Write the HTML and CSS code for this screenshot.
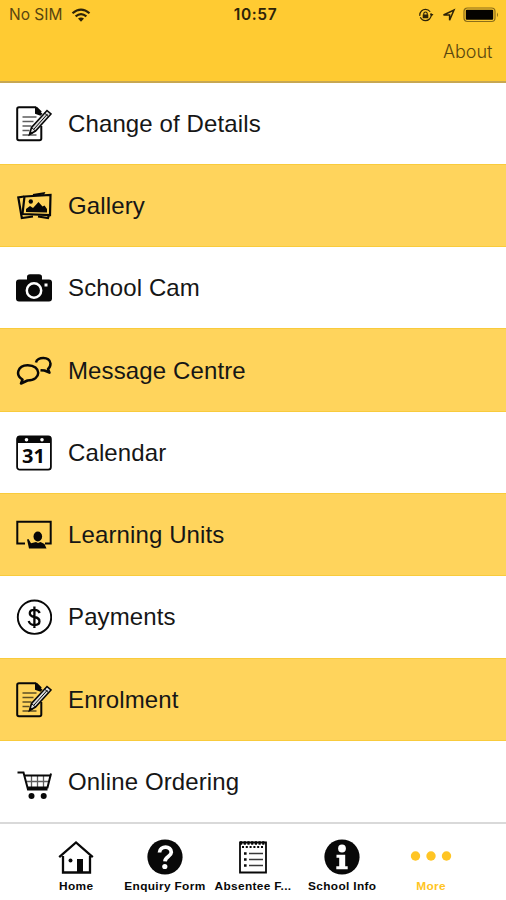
FILE: index.html
```html
<!DOCTYPE html>
<html lang="en">
<head>
<meta charset="utf-8">
<title>More</title>
<link rel="stylesheet" href="styles.css">
</head>
<body>
<svg class="defs" aria-hidden="true">
  <symbol id="form" viewBox="0 0 36 36">
    <path d="M20 1.200H3Q1.200 1.200 1.200 3v29.500Q1.200 34.300 3 34.300h20.500q1.800 0 1.800-1.800V20M20 1.200l5 5" fill="none" stroke="currentColor" stroke-width="2"/>
    <path d="M19 .8l7.500 7-2 2-5.500-2z"/>
    <path d="M6.500 11h14M6.500 15.500h11M6.500 20h9M6.500 24.500h7M6.500 29h14" stroke="currentColor" stroke-width="1.300" opacity=".65"/>
    <path d="M13.500 28.500l2-7L31 4.500l4 3.500-15.500 17z" class="pencil" stroke="currentColor" stroke-width="1.600"/>
    <path d="M18 23L31.500 8M28.500 7l4 3.700M15.500 21.500l4 3.500" fill="none" stroke="currentColor" stroke-width="1"/>
    <path d="M13 29l1.200-4 2.800 2.500z"/>
  </symbol>
</svg>
<header class="top">
  <div class="status">
    <div class="left"><span class="carrier">No SIM</span>
      <svg class="wifi" viewBox="0 0 20 14"><path d="M1.500 5.300Q10-2.200 18.500 5.300M4.600 8.300Q10 3.800 15.400 8.300" fill="none" stroke="currentColor" stroke-width="2.200"/><path d="M7 10.600Q10 8.300 13 10.600L10 13.700z"/></svg>
    </div>
    <span class="time">10:57</span>
    <div class="right">
      <svg class="lock" viewBox="0 0 16 14"><circle cx="7.500" cy="7" r="5.700" fill="none" stroke="currentColor" stroke-width="1.200" stroke-dasharray="15 1.500"/><path d="M4.700 6.500h5.600v3.700H4.700zM12 6h3.500l-1.800 2.500z"/><path d="M5.800 7V5.200q1.700-2.300 3.400 0V7" fill="none" stroke="currentColor" stroke-width="1.100"/></svg>
      <svg class="arrow" viewBox="0 0 14 14"><path d="M1.500 7L12 2 7.600 12.300V7z" fill="none" stroke="currentColor" stroke-width="1.500"/></svg>
      <svg class="battery" viewBox="0 0 37 16"><rect x="1" y="1" width="31" height="13.500" rx="3.500" fill="none" stroke="#8b6d19" stroke-width="1.200"/><rect x="2.800" y="2.800" width="27.400" height="10" rx="1"/><path d="M34 5.500q2 2.300 0 4.600z" fill="#8b6d19"/></svg>
    </div>
  </div>
  <div class="nav"><a class="about">About</a></div>
</header>
<main class="list">
  <div class="row"><svg class="icon"><use href="#form"/></svg><span class="label">Change of Details</span></div>
  <div class="row"><svg class="icon" viewBox="0 0 36 36"><g fill="none" stroke="currentColor" stroke-width="2.200"><path d="M8 8.500L2.300 9.500l3.500 20.500L17 28.500M27 6.500l.5-1L17 7M22 28.500l10 1.500 1-3"/><path d="M8.500 8.500L34.500 7 34 27 6.500 26z"/></g><circle cx="14.800" cy="13.500" r="2.200"/><path d="M10 24v-3l4-3 3 2 5.500-6 4 4.500 2-1 2.500 3.500v3.500z"/></svg><span class="label">Gallery</span></div>
  <div class="row"><svg class="icon" viewBox="0 0 36 36"><path d="M3 9.500h8V7Q11 4.200 14 4.200h9Q26 4.200 26 7v2.500h7q3 0 3 3v16q0 3-3 3H3q-3 0-3-3v-16q0-3 3-3z"/><circle cx="18" cy="20.500" r="7.200" fill="none" stroke="#fff" stroke-width="2.500"/><rect x="28.500" y="13.500" width="3" height="3" fill="#fff"/></svg><span class="label">School Cam</span></div>
  <div class="row"><svg class="icon" viewBox="0 0 36 36"><g fill="none" stroke="currentColor" stroke-width="2.500" stroke-linejoin="round"><path d="M6.500 26.500C-1 22 1.500 12.500 11.500 12.300c14-.2 14.500 15.200 0 15.200L5 30.500z"/><path d="M20 9.500C21 3.500 34 3 34.500 10.500q0 3.500-2.500 5.500l1.500 3.700-5-2.200-4-.3"/></g></svg><span class="label">Message Centre</span></div>
  <div class="row"><svg class="icon" viewBox="0 0 36 36"><rect x="1.100" y="1.300" width="33.800" height="33.400" rx="2.700" fill="none" stroke="currentColor" stroke-width="1.800"/><path d="M1 8V3q0-2 2-2h30q2 0 2 2v5z"/><g fill="#fff"><circle cx="10.500" cy="4.700" r="1.800"/><circle cx="26" cy="4.700" r="1.800"/></g><text class="date" x="17.500" y="28.300">31</text></svg><span class="label">Calendar</span></div>
  <div class="row"><svg class="icon" viewBox="0 0 36 36"><path d="M9 26.500H1.300V4.700h33.400v21.800H29" fill="none" stroke="currentColor" stroke-width="2"/><ellipse cx="21.800" cy="19.500" rx="4.300" ry="5"/><path d="M11 22.500l1.500-.5 2.500 4.200 5-1.200 2 1 2.500-1 4 2 2 4.500H13z"/></svg><span class="label">Learning Units</span></div>
  <div class="row"><svg class="icon" viewBox="0 0 36 36"><circle cx="18.500" cy="18.200" r="16.700" fill="none" stroke="currentColor" stroke-width="1.900"/><path d="M23.700 14Q22.500 10.800 18.400 10.800c-6 0-6.300 6 0 7.200 7 1.300 6.500 8 0 8q-4.500 0-5.700-4M18.400 7.500V29" fill="none" stroke="currentColor" stroke-width="2.300"/></svg><span class="label">Payments</span></div>
  <div class="row"><svg class="icon"><use href="#form"/></svg><span class="label">Enrolment</span></div>
  <div class="row"><svg class="icon" viewBox="0 0 36 36"><path d="M1.500 8.500h6l4.500 17h19.500M8.500 11.500h26l-3 12H12M35 9.500l-.7 3" fill="none" stroke="currentColor" stroke-width="2"/><path d="M10.500 17.500h22M15.500 12v11M21.500 12v11M27.500 12v11" stroke="currentColor" stroke-width="1.300" opacity=".65"/><circle cx="15.500" cy="32" r="3"/><circle cx="27.700" cy="32" r="3"/></svg><span class="label">Online Ordering</span></div>
</main>
<footer class="tabs">
  <a class="tab"><svg class="icon" viewBox="0 0 36 36"><path d="M1.200 18.200L18 3.500l16.800 14.700M5 17v16.500h27V17" fill="none" stroke="currentColor" stroke-width="2.300"/><path d="M19 20h6v13h-6z"/><circle cx="12.500" cy="21.500" r="2"/></svg><span>Home</span></a>
  <a class="tab"><svg class="icon" viewBox="0 0 36 36"><circle cx="18" cy="18" r="17.600"/><path d="M12.500 13.500c.3-7.200 12-7 11.800-.2-.1 4.200-6.100 4.200-6.300 9" fill="none" stroke="#fff" stroke-width="3.800"/><circle cx="17.800" cy="27.500" r="2.600" fill="#fff"/></svg><span>Enquiry Form</span></a>
  <a class="tab"><svg class="icon" viewBox="0 0 36 36"><path d="M5 3.500h26v30H5z" fill="none" stroke="currentColor" stroke-width="1.800"/><path d="M5 4h26" stroke="currentColor" stroke-width="3.500" stroke-dasharray="2.200 1.500"/><path d="M7 8h22" stroke="currentColor" stroke-width="2" stroke-dasharray="2 1.800"/><path d="M14 14.500h14M14 20.500h14M14 26.500h14" stroke="currentColor" stroke-width="1.300" opacity=".8"/><path d="M9 14.500h2.600M9 20.500h2.600M9 26.500h2.600" stroke="currentColor" stroke-width="2.500"/></svg><span>Absentee F...</span></a>
  <a class="tab"><svg class="icon" viewBox="0 0 36 36"><circle cx="18" cy="18" r="17.600"/><g fill="#fff"><circle cx="18" cy="9.500" r="3.900"/><path d="M12.500 15.800h8.700v11.500h2.500v2.900H12.300v-2.900h2.900v-8.600h-2.700z"/></g></svg><span>School Info</span></a>
  <a class="tab active"><svg class="dots" viewBox="0 0 42 36"><circle cx="5.500" cy="17" r="4.700"/><circle cx="21" cy="17" r="4.700"/><circle cx="36.500" cy="17" r="4.700"/></svg><span>More</span></a>
</footer>
</body>
</html>
```
FILE: styles.css
```css
* { box-sizing: border-box; }
body {
  margin: 0;
  width: 506px;
  height: 900px;
  overflow: hidden;
  display: flex;
  flex-direction: column;
  background: #fff;
  color: #080808;
  font-family: "Liberation Sans", Arial, sans-serif;
}
svg { display: block; fill: currentColor; flex: none; }
.defs { width: 0; height: 0; position: absolute; }
.top {
  height: 82.500px;
  background: #ffcb32;
  border-bottom: 2px solid #c7a752;
  flex: none;
}
.status {
  height: 29px;
  padding: 0 6px 0 9px;
  display: grid;
  grid-template-columns: 1fr auto 1fr;
  align-items: center;
  color: #2d2308;
}
.left, .right { display: flex; align-items: center; }
.right { justify-content: flex-end; }
.carrier { font: 15.500px Inter, sans-serif; color: #58450f; width: 55px; margin-right: 7px; white-space: nowrap; }
.wifi { width: 20px; height: 14px; }
.time { font: 600 15.500px Inter, sans-serif; letter-spacing: .65px; padding-left: 2px; }
.lock { width: 16px; height: 14px; margin-right: 8px; }
.arrow { width: 14px; height: 14px; margin-right: 7px; }
.battery { width: 37px; height: 16px; color: #050300; }
.nav { display: flex; justify-content: flex-end; padding: 11px 13.500px 0 0; }
.about { font: 300 18px/24px Inter, sans-serif; color: #5a470f; }
.list { height: 739.500px; flex: none; display: grid; grid-template-rows: repeat(9, 82.300px); overflow: hidden; }
.row { display: flex; align-items: center; padding: 0 16px; gap: 16px; }
.row:nth-child(even) { background: #ffd45c; border-top: 1px solid #f9cb3c; border-bottom: 1px solid #f9cb3c; margin-top: -1px; padding-top: 1px; }
.icon { width: 36px; height: 36px; }
.pencil { fill: #ddd; }
.row:nth-child(even) .pencil { fill: #dfb544; }
.label { font-size: 24px; line-height: 30px; letter-spacing: .12px; color: #161616; white-space: nowrap; }
.date { font: bold 20px "Noto Sans", sans-serif; text-anchor: middle; }
.tabs {
  flex: 1;
  border-top: 2px solid #d9d9d9;
  padding: 14.500px 31px 0 32px;
  display: grid;
  grid-template-columns: repeat(5, 1fr);
}
.tab { display: flex; flex-direction: column; align-items: center; font: bold 10.500px/14px "Liberation Sans", sans-serif; letter-spacing: .3px; white-space: nowrap; }
.tab span { margin-top: 4.500px; transform: scaleX(1.13); }
.dots { width: 42px; height: 36px; }
.active { color: #ffc524; }
```
